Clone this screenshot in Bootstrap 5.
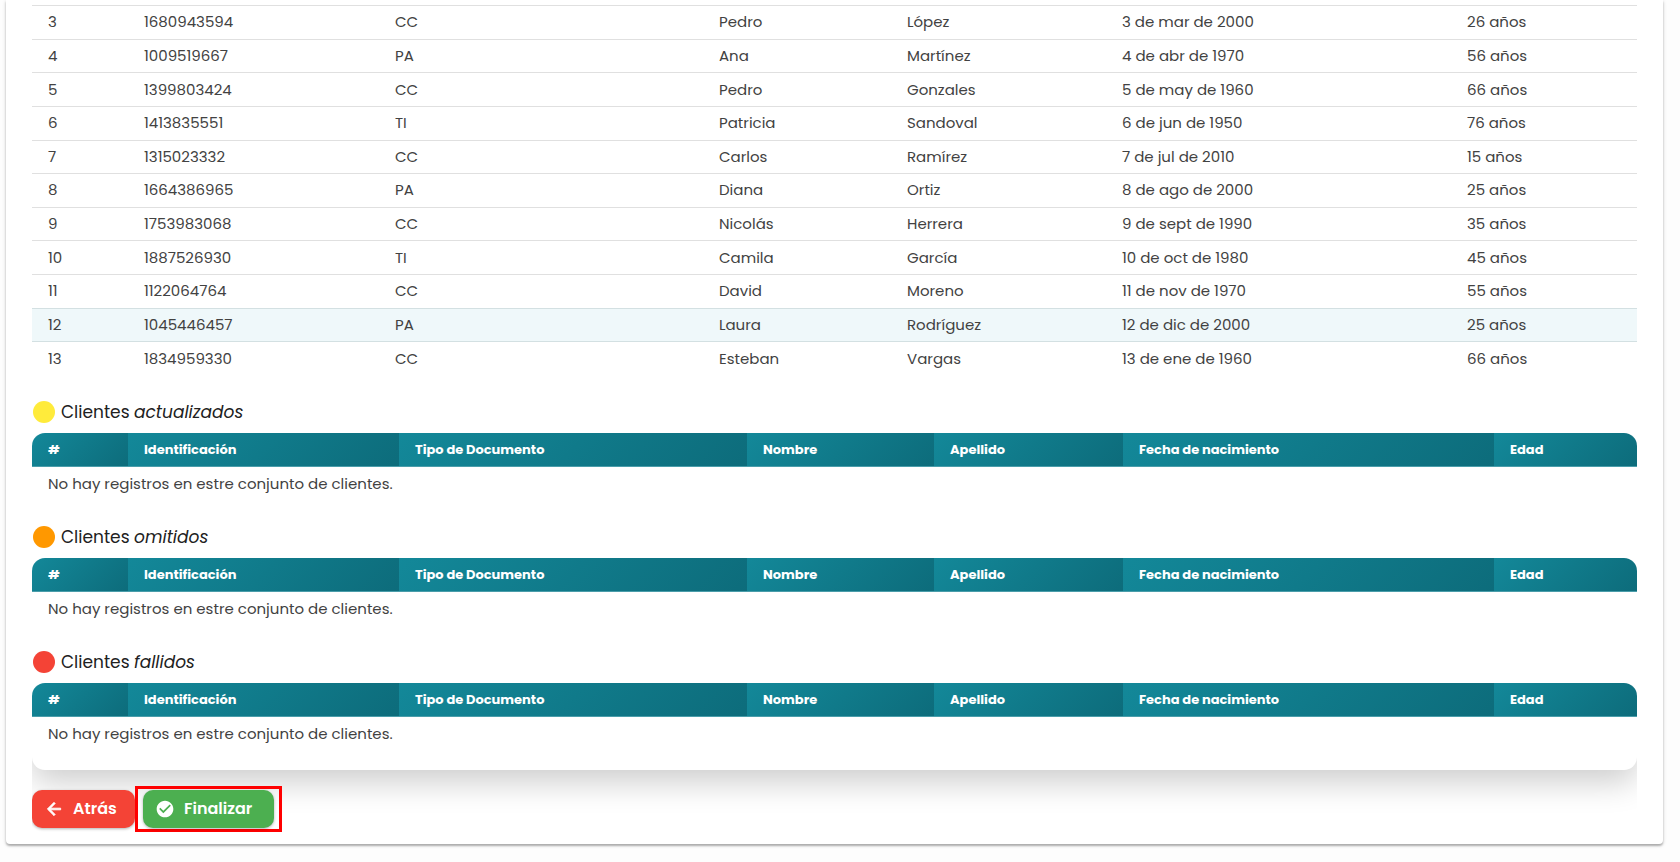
<!DOCTYPE html>
<html lang="es">
<head>
<meta charset="utf-8">
<meta name="viewport" content="width=device-width, initial-scale=1">
<title>Resumen de clientes</title>
<link href="https://cdn.jsdelivr.net/npm/bootstrap@5.3.0/dist/css/bootstrap.min.css" rel="stylesheet">
<style>
  body { font-family: Poppins, Inter, "Noto Sans", sans-serif; font-size: 15px; background: #fdfdfd; color: #212121; }
  .page { padding: 0 17px 18px 6px; }
  .panel { background: #fff; border-radius: 0 0 4px 4px; padding: 5px 26px 12px; box-shadow: 0 2px 2px rgba(0,0,0,.25), 0 1px 4px rgba(0,0,0,.15); }
  .clip { overflow: hidden; }
  .results { background: #fff; border-radius: 0 0 13px 13px; padding-bottom: 20px; box-shadow: 0 12px 32px rgba(0,0,0,.2); }
  .clients { width: 100%; table-layout: fixed; border-collapse: separate; border-spacing: 0; color: #424242; }
  .clients td, .clients th { padding: 0 16px; height: 33px; line-height: 20px; vertical-align: middle; }
  .created { height: 370px; }
  .created td { border-top: 1px solid #e0e0e0; }
  .created tr.active-row td { background: #eff8fa; border-top-color: #d3e0e2; }
  .created tr.active-row + tr td { border-top-color: #d3e0e2; }
  .clients th { height: 34px; font-size: 13px; font-weight: 700; color: #fff; background: linear-gradient(135deg, #138899, #0d6c7b); border-bottom: 1px solid #4a9daa; }
  .clients th:first-child { border-top-left-radius: 13px; }
  .clients th:last-child { border-top-right-radius: 13px; }
  .created .c1 { width: 96px } .created .c2 { width: 251px } .created .c3 { width: 324px } .created .c4 { width: 188px }
  .created .c5 { width: 215px } .created .c6 { width: 345px } .created .c7 { width: 186px }
  .group .c1 { width: 96px } .group .c2 { width: 271px } .group .c3 { width: 348px } .group .c4 { width: 187px }
  .group .c5 { width: 189px } .group .c6 { width: 371px } .group .c7 { width: 143px }
  .group-title { font-size: 17px; line-height: 24px; font-weight: 400; margin: 25px 0 9px; gap: 6px; }
  .dot { width: 22px; height: 22px; border-radius: 50%; margin-left: 1px; }
  .dot-yellow { background: #ffeb3b; } .dot-orange { background: #ff9800; } .dot-red { background: #f44336; }
  .action { height: 38px; padding: 0 12px; border-radius: 10px; border: 0; font-size: 16px; font-weight: 600; color: #fff; gap: 9px; box-shadow: 0 1px 3px rgba(0,0,0,.3); }
  .action:hover { color: #fff; }
  .action svg { width: 20px; height: 20px; fill: currentColor; flex: none; }
  .action-back svg { stroke: currentColor; stroke-width: 1; }
  .action-back { background: #f44336; width: 103px; }
  .action-done { background: #4caf50; width: 131px; }
  .highlight { border: 3px solid #f00; padding: 1px 5px; }
</style>
</head>
<body>
<main class="page">
  <div class="panel">
    <div class="clip">
      <div class="results">
        <table class="clients created">
          <colgroup><col class="c1"><col class="c2"><col class="c3"><col class="c4"><col class="c5"><col class="c6"><col class="c7"></colgroup>
          <tbody>
            <tr><td>3</td><td>1680943594</td><td>CC</td><td>Pedro</td><td>López</td><td>3 de mar de 2000</td><td>26 años</td></tr>
            <tr><td>4</td><td>1009519667</td><td>PA</td><td>Ana</td><td>Martínez</td><td>4 de abr de 1970</td><td>56 años</td></tr>
            <tr><td>5</td><td>1399803424</td><td>CC</td><td>Pedro</td><td>Gonzales</td><td>5 de may de 1960</td><td>66 años</td></tr>
            <tr><td>6</td><td>1413835551</td><td>TI</td><td>Patricia</td><td>Sandoval</td><td>6 de jun de 1950</td><td>76 años</td></tr>
            <tr><td>7</td><td>1315023332</td><td>CC</td><td>Carlos</td><td>Ramírez</td><td>7 de jul de 2010</td><td>15 años</td></tr>
            <tr><td>8</td><td>1664386965</td><td>PA</td><td>Diana</td><td>Ortiz</td><td>8 de ago de 2000</td><td>25 años</td></tr>
            <tr><td>9</td><td>1753983068</td><td>CC</td><td>Nicolás</td><td>Herrera</td><td>9 de sept de 1990</td><td>35 años</td></tr>
            <tr><td>10</td><td>1887526930</td><td>TI</td><td>Camila</td><td>García</td><td>10 de oct de 1980</td><td>45 años</td></tr>
            <tr><td>11</td><td>1122064764</td><td>CC</td><td>David</td><td>Moreno</td><td>11 de nov de 1970</td><td>55 años</td></tr>
            <tr class="active-row"><td>12</td><td>1045446457</td><td>PA</td><td>Laura</td><td>Rodríguez</td><td>12 de dic de 2000</td><td>25 años</td></tr>
            <tr><td>13</td><td>1834959330</td><td>CC</td><td>Esteban</td><td>Vargas</td><td>13 de ene de 1960</td><td>66 años</td></tr>
          </tbody>
        </table>

        <section>
          <h2 class="group-title d-flex align-items-center"><span class="dot dot-yellow"></span><span>Clientes <em>actualizados</em></span></h2>
          <table class="clients group">
            <colgroup><col class="c1"><col class="c2"><col class="c3"><col class="c4"><col class="c5"><col class="c6"><col class="c7"></colgroup>
            <thead><tr><th>#</th><th>Identificación</th><th>Tipo de Documento</th><th>Nombre</th><th>Apellido</th><th>Fecha de nacimiento</th><th>Edad</th></tr></thead>
            <tbody><tr><td colspan="7">No hay registros en estre conjunto de clientes.</td></tr></tbody>
          </table>
        </section>

        <section>
          <h2 class="group-title d-flex align-items-center"><span class="dot dot-orange"></span><span>Clientes <em>omitidos</em></span></h2>
          <table class="clients group">
            <colgroup><col class="c1"><col class="c2"><col class="c3"><col class="c4"><col class="c5"><col class="c6"><col class="c7"></colgroup>
            <thead><tr><th>#</th><th>Identificación</th><th>Tipo de Documento</th><th>Nombre</th><th>Apellido</th><th>Fecha de nacimiento</th><th>Edad</th></tr></thead>
            <tbody><tr><td colspan="7">No hay registros en estre conjunto de clientes.</td></tr></tbody>
          </table>
        </section>

        <section>
          <h2 class="group-title d-flex align-items-center"><span class="dot dot-red"></span><span>Clientes <em>fallidos</em></span></h2>
          <table class="clients group">
            <colgroup><col class="c1"><col class="c2"><col class="c3"><col class="c4"><col class="c5"><col class="c6"><col class="c7"></colgroup>
            <thead><tr><th>#</th><th>Identificación</th><th>Tipo de Documento</th><th>Nombre</th><th>Apellido</th><th>Fecha de nacimiento</th><th>Edad</th></tr></thead>
            <tbody><tr><td colspan="7">No hay registros en estre conjunto de clientes.</td></tr></tbody>
          </table>
        </section>
      </div>

      <div class="d-flex align-items-center mt-3">
        <button type="button" class="btn action action-back d-flex align-items-center">
          <svg viewBox="0 0 24 24" aria-hidden="true"><path d="M20 11H7.83l5.59-5.59L12 4l-8 8 8 8 1.41-1.41L7.83 13H20v-2z"/></svg>
          <span>Atrás</span>
        </button>
        <div class="highlight">
          <button type="button" class="btn action action-done d-flex align-items-center">
            <svg viewBox="0 0 24 24" aria-hidden="true"><path d="M12 2C6.48 2 2 6.48 2 12s4.48 10 10 10 10-4.48 10-10S17.520 2 12 2zm-2 15-5-5 1.410-1.410L10 14.170l7.590-7.590L19 8l-9 9z"/></svg>
            <span>Finalizar</span>
          </button>
        </div>
      </div>
    </div>
  </div>
</main>
<script src="https://cdn.jsdelivr.net/npm/bootstrap@5.3.0/dist/js/bootstrap.bundle.min.js"></script>
</body>
</html>
